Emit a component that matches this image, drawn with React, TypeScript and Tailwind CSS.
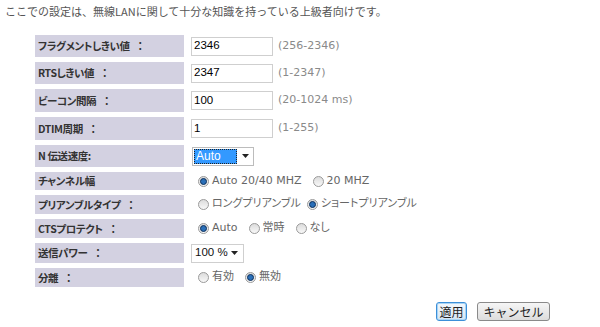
import React from "react";

const JP = "font-['Noto_Sans_CJK_JP',sans-serif]";
const V = "font-['DejaVu_Sans','Noto_Sans_CJK_JP',sans-serif]";

function Radio({ checked }: { checked?: boolean }) {
  return (
    <span className="inline-flex w-[11px] h-[11px] rounded-full border border-[#9a9a9a] bg-gradient-to-b from-[#dcdcdc] to-[#f8f8f8] items-center justify-center mr-[3px] shrink-0">
      {checked && <span className="w-[7px] h-[7px] rounded-full bg-[#2a6fb8] border border-[#0d2f5a]" />}
    </span>
  );
}

function RadioOpt({ checked, label, mr }: { checked?: boolean; label: string; mr: string }) {
  return (
    <span className={`inline-flex items-center ${mr}`}>
      <Radio checked={checked} />
      <span className={`${V} [font-feature-settings:'palt'] text-[11px] text-[#666]`}>{label}</span>
    </span>
  );
}

function Label({ text }: { text: string }) {
  return (
    <div className="w-[149px] shrink-0 bg-[#d3d1e1] flex items-center pl-[3px]">
      <span className={`${JP} [font-feature-settings:'palt'] font-bold text-[10.5px] tracking-[-0.4px] text-[#333] whitespace-pre`}>{text}</span>
    </div>
  );
}

function TextRow({ label, value, range, h }: { label: string; value: string; range: string; h: string }) {
  return (
    <div className={`flex ${h}`}>
      <Label text={label} />
      <div className="flex items-center pl-[7px]">
        <div className="w-[82px] h-[19px] border border-[#cfcfcf] bg-white flex items-center pl-[2px]">
          <span className="font-['Liberation_Sans',sans-serif] text-[11.5px] font-medium text-[#000]">{value}</span>
        </div>
        <span className={`${V} text-[11px] text-[#8a8a8a] ml-[5px]`}>{range}</span>
      </div>
    </div>
  );
}

function Arrow() {
  return (
    <svg width="7" height="4" viewBox="0 0 7 4" className="shrink-0">
      <path d="M0 0 H7 L3.5 4 Z" fill="#222" />
    </svg>
  );
}

export default function App() {
  return (
    <div className="w-[600px] h-[327px] bg-white relative overflow-hidden">
      <div className={`${JP} text-[11px] text-[#555] pl-[5px] pt-[4px] leading-[14px]`}>
        ここでの設定は、無線LANに関して十分な知識を持っている上級者向けです。
      </div>
      <div className="mt-[17px] ml-[35px] flex flex-col gap-[5px]">
        <TextRow label="フラグメントしきい値    ：" value="2346" range="(256-2346)" h="h-[22px]" />
        <TextRow label="RTSしきい値    ：" value="2347" range="(1-2347)" h="h-[22px]" />
        <TextRow label="ビーコン間隔    ：" value="100" range="(20-1024 ms)" h="h-[23px]" />
        <TextRow label="DTIM周期    ：" value="1" range="(1-255)" h="h-[23px]" />
        <div className="flex h-[22px]">
          <Label text="N 伝送速度:" />
          <div className="flex items-center pl-[8px]">
            <div className="w-[62px] h-[19px] border border-[#bcbcbc] bg-white flex items-center pl-[1px] pr-[4px]">
              <div className="w-[43px] h-[15px] bg-[#3399ff] outline outline-1 outline-dotted outline-[#222] -outline-offset-1 flex items-center pl-[2px]">
                <span className="font-['Liberation_Sans',sans-serif] text-[12px] text-white">Auto</span>
              </div>
              <div className="flex-1" />
              <Arrow />
            </div>
          </div>
        </div>
        <div className="flex h-[18px]">
          <Label text="チャンネル幅" />
          <div className="flex items-center pl-[14px]">
            <RadioOpt checked label="Auto 20/40 MHZ" mr="mr-[11px]" />
            <RadioOpt label="20 MHZ" mr="" />
          </div>
        </div>
        <div className="flex h-[19px]">
          <Label text="プリアンブルタイプ    ：" />
          <div className="flex items-center pl-[14px]">
            <RadioOpt label="ロングプリアンブル" mr="mr-[6px]" />
            <RadioOpt checked label="ショートプリアンブル" mr="" />
          </div>
        </div>
        <div className="flex h-[19px]">
          <Label text="CTSプロテクト    ：" />
          <div className="flex items-center pl-[14px]">
            <RadioOpt checked label="Auto" mr="mr-[11px]" />
            <RadioOpt label="常時" mr="mr-[11px]" />
            <RadioOpt label="なし" mr="" />
          </div>
        </div>
        <div className="flex h-[20px]">
          <Label text="送信パワー    ：" />
          <div className="flex items-center pl-[7px]">
            <div className="w-[53px] h-[19px] border border-[#cfcfcf] bg-white flex items-center pl-[3px] pr-[5px]">
              <span className="font-['Liberation_Sans',sans-serif] text-[11.5px] font-medium text-[#111]">100 %</span>
              <div className="flex-1" />
              <Arrow />
            </div>
          </div>
        </div>
        <div className="flex h-[19px]">
          <Label text="分離    ：" />
          <div className="flex items-center pl-[14px]">
            <RadioOpt label="有効" mr="mr-[11px]" />
            <RadioOpt checked label="無効" mr="" />
          </div>
        </div>
      </div>
      <div className="flex justify-end gap-[10px] pr-[50px] mt-[15px]">
        <button className={`${JP} w-[31px] h-[19px] text-[12px] leading-none text-[#222] rounded-[3px] border border-[#3c8fd8] bg-gradient-to-b from-[#f4f8fc] to-[#d6e6f4] shadow-[inset_0_0_0_1px_#a8d4f5]`}>
          適用
        </button>
        <button className={`${JP} w-[73px] h-[19px] text-[12px] leading-none text-[#222] rounded-[3px] border border-[#8a8a8a] bg-gradient-to-b from-[#f6f6f6] to-[#dcdcdc]`}>
          キャンセル
        </button>
      </div>
    </div>
  );
}
